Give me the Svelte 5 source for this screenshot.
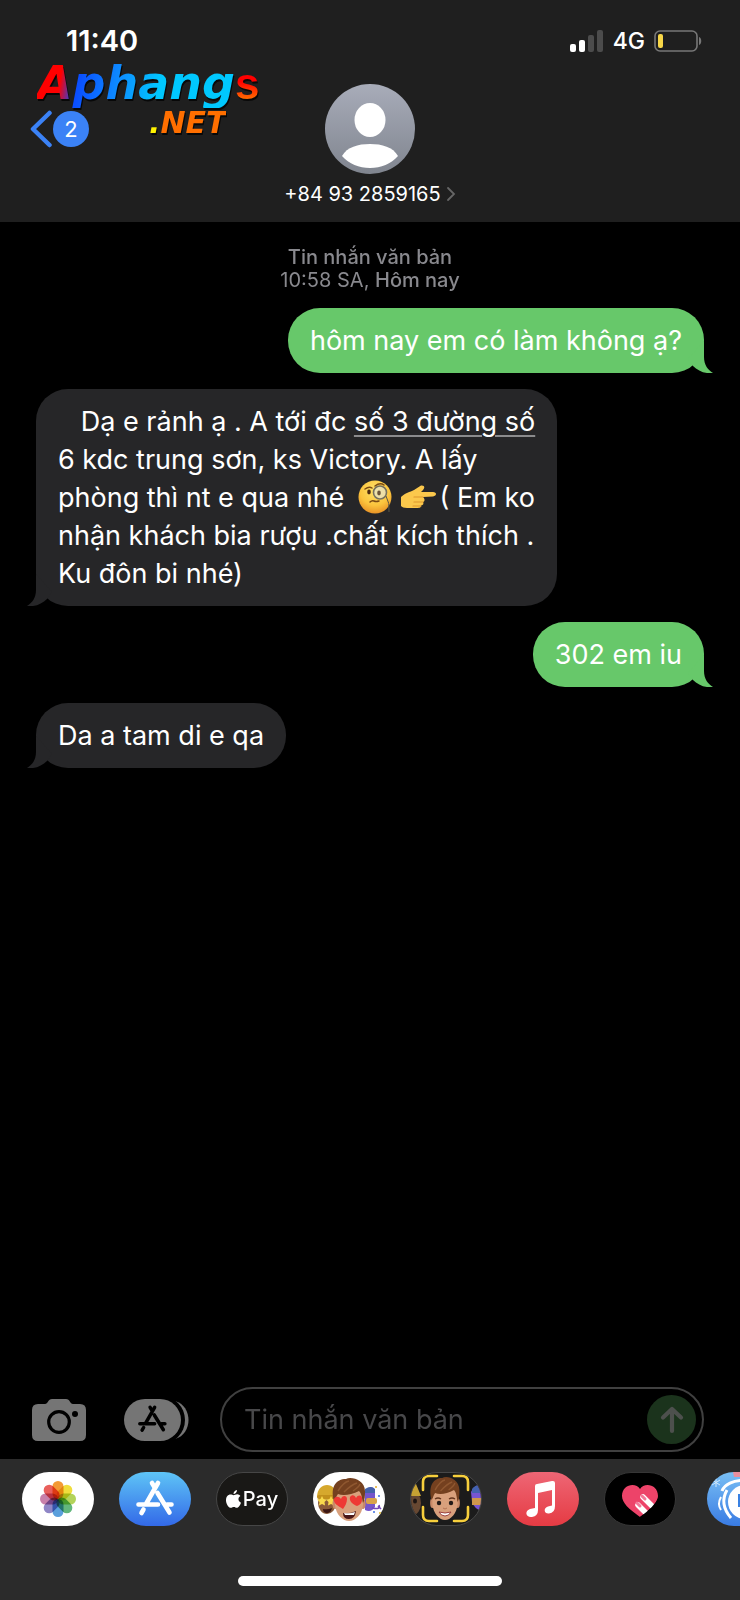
<script lang="ts">
	type AppId = 'photos' | 'store' | 'pay' | 'stickers' | 'memoji' | 'music' | 'touch';

	const apps: Array<{ id: AppId; label: string }> = [
		{ id: 'photos', label: 'Photos' },
		{ id: 'store', label: 'App Store' },
		{ id: 'pay', label: 'Apple Pay' },
		{ id: 'stickers', label: 'Memoji stickers' },
		{ id: 'memoji', label: 'Memoji' },
		{ id: 'music', label: 'Music' },
		{ id: 'touch', label: 'Digital Touch' }
	];

	const petals = ['#f39a35', '#f0dd3c', '#b3d35a', '#62b67c', '#5a9fdc', '#8f86c6', '#c880aa', '#e9605c'];

	let draft = $state('');
</script>

{#snippet tail(side: string)}
	<svg class="tail {side}" viewBox="0 0 34 32" aria-hidden="true">
		<path d="M24 0V16C24 24 28 29 33 32C25 33 18 30 13 25L8 18Z" fill="currentColor" />
	</svg>
{/snippet}

{#snippet storeGlyph()}
	<g fill="none" stroke="currentColor" stroke-width="4.6" stroke-linecap="round">
		<path d="M39 11L27 32M33 11l3 5M38.500 21L50.500 40.500M19.500 32.500H39M48 32.500h4.500M24.500 37.500L22.500 41" />
	</g>
{/snippet}

{#snippet face()}
	<ellipse cx="1" cy="5" rx="2.500" ry="5" fill="#c98a68" />
	<ellipse cx="29" cy="5" rx="2.500" ry="5" fill="#c98a68" />
	<path d="M1 -4C1 -14 29 -14 29 -4V6C28 16 21 22 15 22S2 16 1 6Z" fill="#d9a07c" />
	<path d="M0 2C-4 -12 2 -20 12 -20C17 -23 31 -19 31 -8C31 -3 31 1 29 4C28 0 28 -5 25 -8C17 -4 9 -3 4 -5C2 -3 2 0 0 2Z" fill="#74401f" />
	<path d="M4 -8C7 -13 10 -17 15 -18M10 -7C14 -11 17 -14 23 -16M19 -8C22 -10 25 -12 26 -15" fill="none" stroke="#8f5730" stroke-width="1.500" />
{/snippet}

<svelte:head>
	<title>Tin nhắn</title>
</svelte:head>

<main class="screen">
	<header class="header">
		<div class="status">
			<time class="clock">11:40</time>
			<div class="indicators">
				<svg class="signal" viewBox="0 0 34 22" aria-hidden="true">
					<rect x="0" y="14" width="6" height="8" rx="2" fill="#fff" />
					<rect x="9" y="10" width="6" height="12" rx="2" fill="#fff" />
					<rect x="18" y="5" width="6" height="17" rx="2" fill="#4c4c4c" />
					<rect x="27" y="0" width="6" height="22" rx="2" fill="#4c4c4c" />
				</svg>
				<span>4G</span>
				<svg class="battery" viewBox="0 0 48 22" aria-hidden="true">
					<rect x="1" y="1" width="42" height="20" rx="5" fill="none" stroke="#777" stroke-width="1.600" />
					<rect x="4" y="4" width="5" height="14" rx="2" fill="#f8d748" />
					<path d="M45 7c3 1 3 7 0 8z" fill="#777" />
				</svg>
			</div>
		</div>

		<div class="watermark">
			<div class="brand"><b>Aphang</b><span>s</span></div>
			<div class="domain">.NET</div>
		</div>

		<div class="nav">
			<button class="back" aria-label="Quay lại">
				<svg viewBox="0 0 22 38" aria-hidden="true">
					<path d="M19.500 3L3 19l16.500 16" fill="none" stroke="#3b82f6" stroke-width="4.500" stroke-linecap="round" stroke-linejoin="round" />
				</svg>
				<span class="unread">2</span>
			</button>
			<button class="contact">
				<svg class="avatar" viewBox="0 0 90 90" aria-hidden="true">
					<defs>
						<linearGradient id="avatar-bg" x2="0" y2="1">
							<stop stop-color="#a8acb9" />
							<stop offset="1" stop-color="#80858f" />
						</linearGradient>
					</defs>
					<circle cx="45" cy="45" r="45" fill="url(#avatar-bg)" />
					<ellipse cx="45" cy="36" rx="15.500" ry="17" fill="#fff" />
					<path d="M17 72C22 63 33 60 45 60S68 63 73 72C66 80 56 84 45 84S24 80 17 72Z" fill="#fff" />
				</svg>
				<span class="number">
					+84 93 2859165
					<svg viewBox="0 0 10 16" aria-hidden="true">
						<path d="M2 2l6 6-6 6" fill="none" stroke="#666" stroke-width="1.800" stroke-linecap="round" />
					</svg>
				</span>
			</button>
		</div>
	</header>

	<section class="thread" aria-label="Tin nhắn">
		<p class="stamp"><strong>Tin nhắn văn bản</strong><br />10:58 SA, <strong>Hôm nay</strong></p>

		<p class="bubble sent">
			hôm nay em có làm không ạ?
			{@render tail('right')}
		</p>
		<p class="bubble received">
			&nbsp;&nbsp;&nbsp;Dạ e rảnh ạ . A tới đc <a href="#map">số 3 đường số</a><br />
			6 kdc trung sơn, ks Victory. A lấy<br />
			phòng thì nt e qua nhé
			<svg class="emoji monocle" viewBox="0 0 34 34" role="img" aria-label="🧐">
				<defs>
					<radialGradient id="skin" cy=".3" r=".75">
						<stop stop-color="#ffe36b" />
						<stop offset=".6" stop-color="#fbc43d" />
						<stop offset="1" stop-color="#e58a22" />
					</radialGradient>
				</defs>
				<circle cx="17" cy="17" r="16.500" fill="url(#skin)" />
				<path d="M7 9q4-3 7-1M17 6q5-4 9-1" fill="none" stroke="#7a4a14" stroke-width="1.500" stroke-linecap="round" />
				<ellipse cx="11" cy="12" rx="1.800" ry="2.400" fill="#4d2b10" />
				<circle cx="22" cy="12.500" r="6.500" fill="#e7e3c4" fill-opacity=".75" stroke="#74705f" stroke-width="1.600" />
				<ellipse cx="21" cy="13" rx="1.800" ry="2.400" fill="#6b543a" />
				<path d="M28 16q4 7 3 16" fill="none" stroke="#595645" />
				<path d="M12 22q2-2 4-1t5 0" fill="none" stroke="#7a4a14" stroke-width="1.500" stroke-linecap="round" />
			</svg>
			<svg class="emoji hand" viewBox="0 0 36 24" role="img" aria-label="👉">
				<path d="M1 12C5 8 10 7 14 5L21 .500C25 0 25 3 23 5L21 7H33C37 7 37 11 33 11.500L23 12C25 14 25 16 23 17C24 19 23 20 21 20.500C21 23 19 23 16 23H7C4 23 2 22 1 21Z" fill="#fbc84c" />
				<path d="M14 12h9M14 17h9M13 21h8" fill="none" stroke="#dd962c" stroke-width="1.200" stroke-linecap="round" />
			</svg>( Em ko<br />
			nhận khách bia rượu .chất kích thích .<br />
			Ku đôn bi nhé)
			{@render tail('left')}
		</p>
		<p class="bubble sent">
			302 em iu
			{@render tail('right')}
		</p>
		<p class="bubble received">
			Da a tam di e qa
			{@render tail('left')}
		</p>
	</section>

	<form class="composer" onsubmit={(e) => e.preventDefault()}>
		<button type="button" class="camera" aria-label="Camera">
			<svg viewBox="0 0 54 42" aria-hidden="true">
				<path d="M6 5H13C16 5 16 0 20 0H34C38 0 38 5 41 5H48Q54 5 54 11V36Q54 42 48 42H6Q0 42 0 36V11Q0 5 6 5Z" fill="#757575" />
				<circle cx="27" cy="23" r="10.300" fill="none" stroke="#000" stroke-width="3.200" />
				<circle cx="43" cy="15" r="3" fill="#000" />
			</svg>
		</button>
		<button type="button" class="drawer-toggle" aria-label="Ứng dụng">
			<svg viewBox="0 0 66 42" aria-hidden="true">
				<path d="M51 2C69 7 69 35 51 40Z" fill="#757575" />
				<rect x="-3" y="-3" width="64" height="48" rx="24" fill="#000" />
				<rect width="57" height="42" rx="21" fill="#757575" />
				<g transform="translate(1 0) scale(.76)" color="#000">{@render storeGlyph()}</g>
			</svg>
		</button>
		<div class="field">
			<input type="text" placeholder="Tin nhắn văn bản" aria-label="Tin nhắn văn bản" bind:value={draft} />
			<button class="send" aria-label="Gửi">
				<svg viewBox="0 0 24 28" aria-hidden="true">
					<path d="M12 25V3M3 11.500L12 3l9 8.500" fill="none" stroke="#4d504d" stroke-width="4.200" stroke-linecap="round" stroke-linejoin="round" />
				</svg>
			</button>
		</div>
	</form>

	<footer class="drawer">
		<nav class="apps" aria-label="iMessage">
			{#each apps as app (app.id)}
				<button class="app {app.id}" aria-label={app.label}>
					{#if app.id === 'photos'}
						<svg viewBox="0 0 72 54" aria-hidden="true">
							{#each petals as color, i}
								<rect class="petal" x="30.500" y="9" width="11" height="18" rx="5.500" fill={color} transform="rotate({i * 45} 36 27)" />
							{/each}
						</svg>
					{:else if app.id === 'store'}
						<svg viewBox="0 0 72 54" aria-hidden="true">{@render storeGlyph()}</svg>
					{:else if app.id === 'pay'}
						<svg class="apple" viewBox="0 0 15 18" aria-hidden="true">
							<path d="M11 0c.1 2-1.500 4-3.500 4C7.300 2.200 9 .3 11 0ZM7.700 5.200C8.500 5.200 9.500 4.300 11.200 4.300c1.300 0 2.500.7 3.200 1.800-2.900 1.800-2.400 5.400.6 6.600-.7 2-2.300 5.100-4.200 5.100-1.200 0-1.600-.8-3-.8s-1.900.8-3 .8C2.700 17.800 0 13.900 0 10.200 0 6.600 2.200 4.500 4.400 4.500c1.400 0 2.400.7 3.300.7Z" fill="#fff" />
						</svg>
						<span>Pay</span>
					{:else if app.id === 'stickers'}
						<svg viewBox="0 0 72 54" aria-hidden="true">
							<ellipse cx="14" cy="31" rx="9" ry="11" fill="#8a5a38" />
							<path d="M4 25C4 9 24 9 24 25Z" fill="#d6a82d" />
							<rect x="4" y="23" width="20" height="4" rx="2" fill="#c2901c" />
							<path d="M9 24l1.500 3 3.500.5-2.500 2.500.5 3.500-3-1.500-3 1.500.5-3.500L4 27.500l3.500-.5zM18 24l1.500 3 3.500.5-2.500 2.500.5 3.500-3-1.500-3 1.500.5-3.500-2.500-2.500 3.500-.5z" fill="#f9d94d" />
							<path d="M10 37q5 1 9-1-1 5-5 5t-4-4" fill="#3c1714" />
							<path d="M52 18q7-6 10 0v17q-4 6-10 3z" fill="#7555cb" />
							<path d="M52 17q6-4 10 0v4H52z" fill="#4361a9" />
							<rect x="53" y="26" width="11" height="6" rx="2" fill="#d9a24a" />
							<path d="M59 36q9 2 7-3M65 34l3 3" fill="none" stroke="#7146ba" stroke-width="1.600" />
							<circle cx="63" cy="15" r="1" fill="#e5ac25" />
							<circle cx="66" cy="24" r="1" fill="#3c6de0" />
							<circle cx="67" cy="41" r="1" fill="#e6be28" />
							<circle cx="61" cy="40" r="1" fill="#3c6de0" />
							<g transform="translate(21 27)">{@render face()}</g>
							<path d="M30 41q7 1 13-2-1 8-7 8t-6-6" fill="#4b1717" />
							<path d="M31 41q6 1 11-1l-1 3H32z" fill="#fff" />
							<path d="M30 37C25 34 20 31 21 27 22 24 26 24 28 27 29 23 34 23 34 27 34 31 32 34 30 37ZM44 34C39 32 36 29 37 25 39 22 42 23 43 26 45 22 50 23 49 28 49 31 47 33 44 34Z" fill="#ee3934" />
						</svg>
					{:else if app.id === 'memoji'}
						<svg viewBox="0 0 72 54" aria-hidden="true">
							<ellipse cx="3" cy="31" rx="8" ry="12" fill="#674832" />
							<path d="M-4 24C0 14 4 10 6 12L11 24Z" fill="#c8a233" />
							<ellipse cx="5" cy="29" rx="2" ry="2.500" fill="#1d1512" />
							<path d="M61 20q5-10 12-5v24q-8-1-11-9z" fill="#7755d2" />
							<path d="M62 17q5-6 11-3v7H62z" fill="#4362b0" />
							<rect x="62" y="26" width="11" height="7" fill="#cf974c" />
							<g transform="translate(21.500 26) scale(.9 1)">{@render face()}</g>
							<path d="M25 27q3-2 6 0M39 27q3-2 6 0" fill="none" stroke="#65361e" stroke-width="1.400" />
							<circle cx="29" cy="31" r="2.200" fill="#221a18" />
							<circle cx="41" cy="31" r="2.200" fill="#221a18" />
							<path d="M33 36q2 2 4 0" fill="none" stroke="#b57453" />
							<path d="M29 40q6 2 12 0-2 4-6 4T29 40" fill="#fff" stroke="#9a403e" />
							<path d="M13 18V10q0-6 6-6h8M44 4h8q6 0 6 6v8M13 35v8q0 6 6 6h8M44 49h8q6 0 6-6v-8" fill="none" stroke="#f7cf3c" stroke-width="2.600" stroke-linecap="round" />
						</svg>
					{:else if app.id === 'music'}
						<svg viewBox="0 0 72 54" aria-hidden="true">
							<path d="M28 14Q28 12 30 12L45 9Q48 8.500 48 11V34Q48 41 42 41.500C37 42 36 36 41 34.500L45 33.500V18L31 21V38Q31 44 25 45C19 46 17 39 23 37L28 36Z" fill="#fff" />
						</svg>
					{:else}
						<svg viewBox="0 0 72 54" aria-hidden="true">
							<path d="M36 45C25 37 18 31 18 24 18 12 32 10 36 17 40 10 54 12 54 24 54 31 47 37 36 45Z" fill="#ed4369" />
							<g stroke="#fff" stroke-width="5.500" stroke-linecap="round">
								<path d="M34 33l8 8M39 25l10 10" />
							</g>
							<path d="M33 31l3 3M38 24l3 3" stroke="#f27898" stroke-width="3" stroke-linecap="round" />
							<path d="M36 45l5 4 15-14-2-9Q51 34 36 45Z" fill="#000" />
						</svg>
					{/if}
				</button>
			{/each}
			<span class="divider"></span>
			<button class="app extra" aria-label="Thêm">
				<svg viewBox="0 0 72 54" aria-hidden="true">
					<path d="M26 0h20v5H27z" fill="#e98e9d" />
					<path d="M15 19C20 5 52 5 57 19" fill="none" stroke="#fff" stroke-width="3" />
					<path d="M14 25q-4 7 0 13" fill="none" stroke="#fff" stroke-width="2" />
					<path d="M20 18q-8 14 4 28" fill="none" stroke="#fff" stroke-width="3" />
					<circle cx="38" cy="30" r="17" fill="#fff" />
					<path d="M31 22h8v13h-8z" fill="#3981e2" />
					<path d="M9 6v9M5 8l8 5M13 8l-8 5" stroke="#cfe7fb" />
				</svg>
			</button>
		</nav>
		<div class="home"></div>
	</footer>
</main>

<style>
	:global(body) {
		margin: 0;
		background: #000;
	}

	.screen {
		display: flex;
		flex-direction: column;
		min-height: 100vh;
		overflow: hidden;
		background: #000;
		color: #fff;
		font-family: Inter, 'Liberation Sans', sans-serif;
	}

	button {
		padding: 0;
		border: 0;
		background: none;
		color: inherit;
		font: inherit;
		cursor: pointer;
	}

	svg {
		display: block;
	}

	.header {
		position: relative;
		background: #1f1f1f;
		padding-bottom: 16px;
	}

	.status {
		display: flex;
		justify-content: space-between;
		padding: 25px 38px 27px 66px;
	}

	.clock {
		font-size: 29px;
		font-weight: 600;
		line-height: 32px;
	}

	.indicators {
		display: flex;
		align-items: center;
		gap: 9px;
		height: 32px;
		font-size: 23px;
		font-weight: 500;
	}

	.signal {
		width: 34px;
		height: 22px;
	}

	.battery {
		width: 48px;
		height: 22px;
	}

	/* Site logo sits over the header */
	.watermark {
		position: absolute;
		top: 58px;
		left: 37px;
		pointer-events: none;
		filter: drop-shadow(1px 2px 0 #080808);
	}

	.brand {
		display: flex;
		align-items: baseline;
		height: 48px;
	}

	.brand b {
		font: italic bold 46px/50px 'DejaVu Sans', sans-serif;
		background: linear-gradient(100deg, #f00 13%, #0a4bff 21%, #0d8dff 42%, #00c8ff 62%);
		background-clip: text;
		color: transparent;
	}

	.brand span {
		font: bold 44px/50px 'Liberation Sans', sans-serif;
		background: linear-gradient(#f00 45%, #ff7a00 85%);
		background-clip: text;
		color: transparent;
	}

	.domain {
		width: max-content;
		margin-left: 112px;
		background: linear-gradient(90deg, #fff200 12px, #ff6f00 12px);
		background-clip: text;
		color: transparent;
		font: italic bold 30px/34px 'DejaVu Sans', sans-serif;
	}

	.nav {
		display: grid;
		grid-template-columns: 1fr auto 1fr;
		align-items: start;
		padding: 0 30px;
	}

	.back {
		display: flex;
		align-items: center;
		gap: 1px;
		height: 90px;
		justify-self: start;
	}

	.back svg {
		width: 22px;
		height: 38px;
	}

	.unread {
		width: 36px;
		height: 36px;
		border-radius: 50%;
		background: #3b82f6;
		font-size: 22px;
		line-height: 36px;
		text-align: center;
	}

	.contact {
		display: flex;
		flex-direction: column;
		align-items: center;
		gap: 8px;
	}

	.avatar {
		width: 90px;
		height: 90px;
	}

	.number {
		display: flex;
		align-items: center;
		gap: 5px;
		font-size: 20px;
		line-height: 24px;
	}

	.number svg {
		width: 10px;
		height: 16px;
	}

	.thread {
		display: flex;
		flex: 1;
		flex-direction: column;
		gap: 16px;
		padding: 24px 36px;
	}

	.stamp {
		margin: 0;
		color: #89898e;
		font-size: 20px;
		line-height: 23px;
		text-align: center;
	}

	.stamp strong {
		font-weight: 500;
	}

	.bubble {
		position: relative;
		margin: 0;
		padding: 14px 22px 13px;
		border-radius: 32px;
		font-size: 27px;
		line-height: 38px;
	}

	.sent {
		align-self: flex-end;
		background: #67c86a;
	}

	.received {
		align-self: flex-start;
		background: #262628;
	}

	.received a {
		color: inherit;
		text-decoration-color: #8b8b8d;
		text-decoration-thickness: 2px;
		text-underline-offset: 4px;
	}

	.tail {
		position: absolute;
		right: -10px;
		bottom: 0;
		width: 34px;
		height: 32px;
	}

	.sent .tail {
		color: #67c86a;
	}

	.received .tail {
		right: auto;
		left: -10px;
		color: #262628;
		transform: scaleX(-1);
	}

	.emoji {
		display: inline-block;
	}

	.monocle {
		width: 34px;
		height: 34px;
		margin-left: 6px;
		vertical-align: -7px;
	}

	.hand {
		width: 36px;
		height: 24px;
		margin-right: 4px;
		vertical-align: -2px;
	}

	.composer {
		display: flex;
		align-items: center;
		padding: 0 36px 7px 32px;
	}

	.camera svg {
		width: 54px;
		height: 42px;
	}

	.drawer-toggle {
		margin: 0 30px 0 38px;
	}

	.drawer-toggle svg {
		width: 66px;
		height: 42px;
	}

	.field {
		display: flex;
		flex: 1;
		align-items: center;
		height: 61px;
		min-width: 0;
		padding: 0 6px 0 22px;
		border: 2px solid #404040;
		border-radius: 33px;
	}

	.field input {
		flex: 1;
		min-width: 0;
		padding: 0;
		border: 0;
		outline: 0;
		background: none;
		color: #fff;
		font: 27px/38px Inter, 'Liberation Sans', sans-serif;
	}

	.field input::placeholder {
		color: #48484a;
		opacity: 1;
	}

	.send {
		display: grid;
		place-items: center;
		width: 49px;
		height: 49px;
		border-radius: 50%;
		background: #1b331c;
	}

	.send svg {
		width: 24px;
		height: 28px;
	}

	.drawer {
		background: #2b2b2b;
		padding: 13px 0 14px;
		overflow: hidden;
	}

	.apps {
		display: flex;
		gap: 25px;
		padding-left: 22px;
	}

	.app {
		display: flex;
		flex: none;
		align-items: center;
		justify-content: center;
		box-sizing: border-box;
		width: 72px;
		height: 54px;
		border-radius: 27px;
		overflow: hidden;
	}

	.app > svg:not(.apple) {
		flex: none;
		width: 72px;
		height: 54px;
	}

	.photos,
	.stickers {
		background: #fff;
	}

	.petal {
		mix-blend-mode: multiply;
	}

	.store {
		background: linear-gradient(#5ec4f6, #3369e8);
	}

	.pay {
		gap: 2px;
		border: 1px solid #464646;
		background: #191816;
		font-size: 20px;
		font-weight: 500;
	}

	.apple {
		width: 15px;
		height: 18px;
	}

	.memoji {
		border: 1px solid #484848;
		background: #1b1b1b;
	}

	.music {
		background: linear-gradient(#ee6675, #e53b43);
	}

	.touch {
		border: 1px solid #363636;
		background: #000;
	}

	.divider {
		align-self: center;
		width: 2px;
		height: 46px;
		margin: 0 -9px 0 -10px;
		background: #424242;
	}

	.extra {
		background: linear-gradient(#79bff4, #397be3);
	}

	.home {
		width: 264px;
		height: 10px;
		margin: 50px auto 0;
		border-radius: 5px;
		background: #fff;
	}
</style>
